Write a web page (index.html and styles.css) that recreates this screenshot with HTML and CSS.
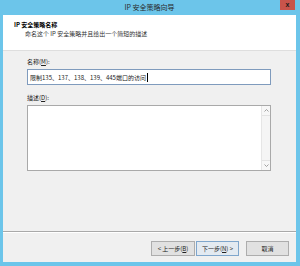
FILE: index.html
```html
<!DOCTYPE html>
<html lang="zh-CN">
<head>
    <meta charset="UTF-8">
    <meta name="viewport" content="width=device-width, initial-scale=1.0">
    <title>IP 安全策略向导</title>
    <link rel="stylesheet" href="styles.css">
</head>
<body>
    <div class="window">
        <div class="titlebar">
            <span class="title">IP 安全策略向导</span>
            <span class="close">x</span>
        </div>
        <div class="client">
            <div class="header">
                <div class="header-title">IP 安全策略名称</div>
                <div class="header-sub">命名这个 IP 安全策略并且给出一个简短的描述</div>
            </div>

            <div class="content">
                <div class="field-label">名称(<u>M</u>):</div>
                <div class="input">限制135、137、138、139、445端口的访问<span class="caret"></span></div>

                <div class="field-label second">描述(<u>D</u>):</div>
                <div class="textarea">
                    <div class="text-body"></div>
                    <div class="scrollbar">
                        <div class="arrow">
                            <svg width="5" height="3" viewBox="0 0 5 3"><path d="M0.5 2.5 L2.5 0.5 L4.5 2.5" fill="none" stroke="#8a8a8a" stroke-width="0.8"/></svg>
                        </div>
                        <div class="track"></div>
                        <div class="arrow">
                            <svg width="5" height="3" viewBox="0 0 5 3"><path d="M0.5 0.5 L2.5 2.5 L4.5 0.5" fill="none" stroke="#8a8a8a" stroke-width="0.8"/></svg>
                        </div>
                    </div>
                </div>
            </div>

            <div class="footer">
                <button class="btn">&lt; 上一步(<u>B</u>)</button>
                <button class="btn btn-default">下一步(<u>N</u>) &gt;</button>
                <button class="btn btn-cancel">取消</button>
            </div>
        </div>
    </div>
</body>
</html>
```

FILE: styles.css
```css
body {
    margin: 0;
    font-family: "Noto Sans CJK SC", "Liberation Sans", sans-serif;
    color: #222;
}
.window {
    width: 300px;
    height: 266px;
    box-sizing: border-box;
    padding: 0 4px 4px 3px;
    background: #6cc5ea;
    display: flex;
    flex-direction: column;
}
.titlebar {
    position: relative;
    height: 15px;
    display: flex;
    align-items: center;
    justify-content: center;
}
.title {
    font-size: 7px;
    line-height: 9px;
    color: #2a2a2a;
    margin-top: -1px;
}
.close {
    position: absolute;
    top: 0;
    right: 1px;
    width: 15px;
    height: 10px;
    background: #c8544b;
    color: #1a1a1a;
    font-family: "Liberation Sans", sans-serif;
    font-size: 7px;
    font-weight: bold;
    line-height: 10px;
    text-align: center;
}
.client {
    flex: 1;
    background: #f0f0f0;
    display: flex;
    flex-direction: column;
}
.header {
    height: 36px;
    box-sizing: border-box;
    padding: 6px 0 0 11px;
    background: #fff;
    border-bottom: 1px solid #dedede;
}
.header-title {
    font-size: 6px;
    line-height: 8px;
    font-weight: bold;
    color: #000;
}
.header-sub {
    font-size: 6px;
    line-height: 8px;
    margin-top: 1px;
    padding-left: 11px;
    color: #333;
}
.content {
    padding: 7px 25px 0 24px;
}
.field-label {
    font-size: 6px;
    line-height: 8px;
    margin-bottom: 3px;
}
.field-label.second {
    margin-top: 9px;
}
.input {
    height: 16px;
    box-sizing: border-box;
    border: 1px solid #7f9bbd;
    background: #fff;
    padding-left: 2px;
    font-size: 6px;
    line-height: 13px;
    display: flex;
    align-items: center;
    white-space: nowrap;
}
.caret {
    width: 1px;
    height: 9px;
    background: #000;
    margin-left: 1px;
}
.textarea {
    height: 66px;
    box-sizing: border-box;
    border: 1px solid #a9a9a9;
    background: #fff;
    display: flex;
}
.text-body {
    flex: 1;
}
.scrollbar {
    width: 8px;
    display: flex;
    flex-direction: column;
    border-left: 1px solid #e6e6e6;
    background: #f5f5f5;
}
.arrow {
    height: 9px;
    display: flex;
    align-items: center;
    justify-content: center;
    background: #f7f7f7;
    border-bottom: 1px solid #e3e3e3;
}
.arrow:last-child {
    border-bottom: none;
    border-top: 1px solid #e3e3e3;
}
.track {
    flex: 1;
}
.footer {
    margin-top: auto;
    height: 31px;
    box-sizing: border-box;
    border-top: 1px solid #a9a9a9;
    box-shadow: inset 0 1px 0 #fff;
    padding: 9px 7px 0 0;
    display: flex;
    justify-content: flex-end;
    align-items: flex-start;
    gap: 1px;
}
.btn {
    width: 44px;
    height: 15px;
    padding: 0;
    box-sizing: border-box;
    border: 1px solid #adadad;
    background: #e1e1e1;
    font-family: inherit;
    font-size: 6px;
    line-height: 12px;
    color: #222;
}
.btn-default {
    width: 43px;
    border-color: #7fa6cc;
    background: #e3eaf1;
}
.btn-cancel {
    width: 43px;
    margin-left: 6px;
}
```
